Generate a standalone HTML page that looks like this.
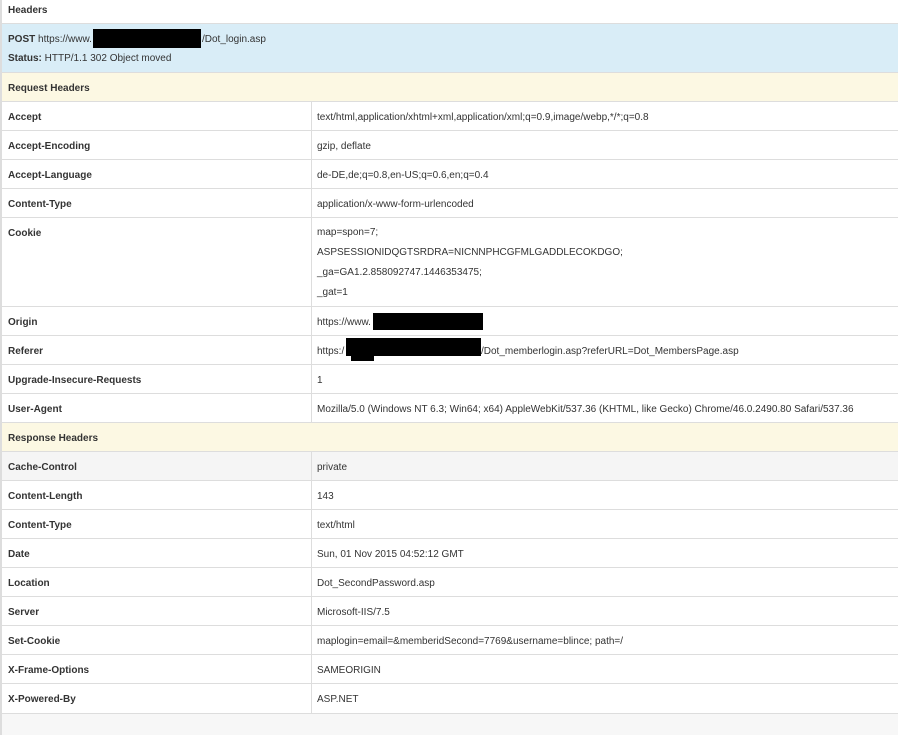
<!DOCTYPE html>
<html><head><style>
body{margin:0;width:898px;height:735px;background:#f7f7f7;font-family:"Liberation Sans",Arial,sans-serif;font-size:10px;color:#333;position:relative;overflow:hidden}
.r{position:absolute;left:0;width:898px;border-bottom:1px solid #ddd;box-sizing:border-box;background:#fff}
.r .k{position:absolute;left:8px;font-weight:bold;top:10px}
.r .v{position:absolute;left:317px;top:10px}
.r .d{position:absolute;left:311px;top:0;bottom:0;border-left:1px solid #ddd}
.blk{position:absolute;background:#000}
</style></head><body>
<div class="r" style="top:0;height:24px;background:#fff"><span class="k" style="top:5px">Headers</span></div>
<div class="r" style="top:24px;height:49px;background:#d9edf7"><span class="k" style="top:10px">POST <span style="font-weight:normal">https://www.</span></span><span style="position:absolute;left:202px;top:10px">/Dot_login.asp</span><span class="k" style="top:29px">Status: <span style="font-weight:normal">HTTP/1.1 302 Object moved</span></span></div>
<div class="blk" style="left:93px;top:29px;width:108px;height:19px"></div>
<div class="r" style="top:73px;height:29px;background:#fcf8e3"><span class="k">Request Headers</span></div>
<div class="r" style="top:102px;height:29px"><div class="d"></div><span class="k">Accept</span><span class="v">text/html,application/xhtml+xml,application/xml;q=0.9,image/webp,*/*;q=0.8</span></div>
<div class="r" style="top:131px;height:29px"><div class="d"></div><span class="k">Accept-Encoding</span><span class="v">gzip, deflate</span></div>
<div class="r" style="top:160px;height:29px"><div class="d"></div><span class="k">Accept-Language</span><span class="v">de-DE,de;q=0.8,en-US;q=0.6,en;q=0.4</span></div>
<div class="r" style="top:189px;height:29px"><div class="d"></div><span class="k">Content-Type</span><span class="v">application/x-www-form-urlencoded</span></div>
<div class="r" style="top:218px;height:89px"><div class="d"></div><span class="k">Cookie</span><span class="v" style="top:5px;line-height:20px">map=spon=7;<br>ASPSESSIONIDQGTSRDRA=NICNNPHCGFMLGADDLECOKDGO;<br>_ga=GA1.2.858092747.1446353475;<br>_gat=1</span></div>
<div class="r" style="top:307px;height:29px"><div class="d"></div><span class="k">Origin</span><span class="v">https://www.</span></div>
<div class="r" style="top:336px;height:29px"><div class="d"></div><span class="k">Referer</span><span class="v">https:/</span><span style="position:absolute;left:481px;top:10px">/Dot_memberlogin.asp?referURL=Dot_MembersPage.asp</span></div>
<div class="blk" style="left:373px;top:313px;width:110px;height:17px"></div>
<div class="blk" style="left:346px;top:338px;width:135px;height:18px"></div>
<div class="blk" style="left:351px;top:356px;width:23px;height:5px"></div>
<div class="r" style="top:365px;height:29px"><div class="d"></div><span class="k">Upgrade-Insecure-Requests</span><span class="v">1</span></div>
<div class="r" style="top:394px;height:29px"><div class="d"></div><span class="k">User-Agent</span><span class="v">Mozilla/5.0 (Windows NT 6.3; Win64; x64) AppleWebKit/537.36 (KHTML, like Gecko) Chrome/46.0.2490.80 Safari/537.36</span></div>
<div class="r" style="top:423px;height:29px;background:#fcf8e3"><span class="k">Response Headers</span></div>
<div class="r" style="top:452px;height:29px;background:#f5f5f5"><div class="d"></div><span class="k">Cache-Control</span><span class="v">private</span></div>
<div class="r" style="top:481px;height:29px"><div class="d"></div><span class="k">Content-Length</span><span class="v">143</span></div>
<div class="r" style="top:510px;height:29px"><div class="d"></div><span class="k">Content-Type</span><span class="v">text/html</span></div>
<div class="r" style="top:539px;height:29px"><div class="d"></div><span class="k">Date</span><span class="v">Sun, 01 Nov 2015 04:52:12 GMT</span></div>
<div class="r" style="top:568px;height:29px"><div class="d"></div><span class="k">Location</span><span class="v">Dot_SecondPassword.asp</span></div>
<div class="r" style="top:597px;height:29px"><div class="d"></div><span class="k">Server</span><span class="v">Microsoft-IIS/7.5</span></div>
<div class="r" style="top:626px;height:29px"><div class="d"></div><span class="k">Set-Cookie</span><span class="v">maplogin=email=&amp;memberidSecond=7769&amp;username=blince; path=/</span></div>
<div class="r" style="top:655px;height:29px"><div class="d"></div><span class="k">X-Frame-Options</span><span class="v">SAMEORIGIN</span></div>
<div class="r" style="top:684px;height:30px"><div class="d"></div><span class="k">X-Powered-By</span><span class="v">ASP.NET</span></div>
<div style="position:absolute;left:0;top:0;width:2px;height:735px;background:#ddd"></div>
</body></html>
